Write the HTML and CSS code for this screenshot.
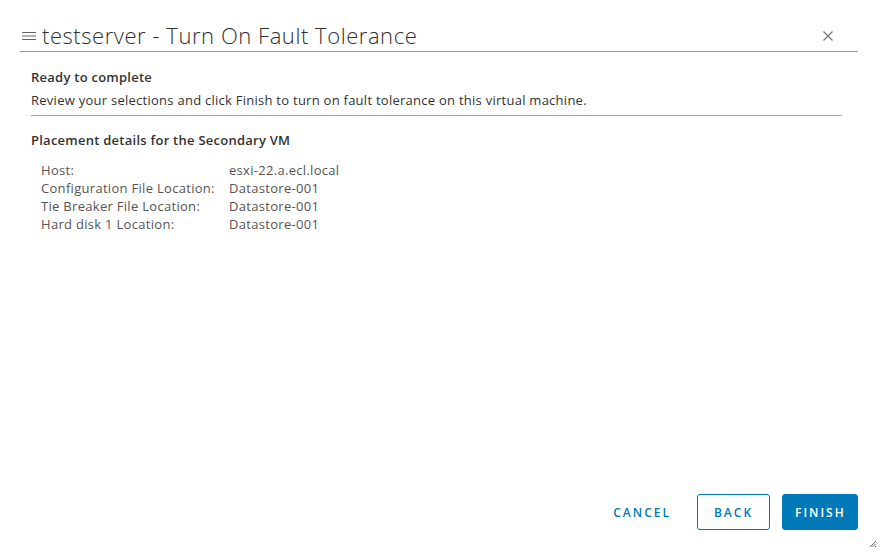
FILE: index.html
```html
<!DOCTYPE html>
<html>
<head>
<meta charset="utf-8">
<link rel="stylesheet" href="styles.css">
</head>
<body>
<div class="modal">
  <header class="modal-header">
    <div class="title">
      <svg class="menu-icon" width="14" height="12" viewBox="0 0 14 12"><path d="M0 2.5h14M0 6h14M0 9.5h14" stroke="#666" stroke-width="1.2" fill="none"/></svg>
      <h1>testserver - Turn On Fault Tolerance</h1>
    </div>
    <svg class="close-icon" width="12" height="12" viewBox="0 0 12 12"><path d="M1.5 1.5l9 9M10.5 1.5l-9 9" stroke="#777" stroke-width="1.3" fill="none"/></svg>
  </header>
  <main class="modal-body">
    <section class="intro">
      <h2>Ready to complete</h2>
      <p>Review your selections and click Finish to turn on fault tolerance on this virtual machine.</p>
    </section>
    <section class="details">
      <h3>Placement details for the Secondary VM</h3>
      <div class="grid">
        <span>Host:</span><span>esxi-22.a.ecl.local</span>
        <span>Configuration File Location:</span><span>Datastore-001</span>
        <span>Tie Breaker File Location:</span><span>Datastore-001</span>
        <span>Hard disk 1 Location:</span><span>Datastore-001</span>
      </div>
    </section>
  </main>
  <footer class="modal-footer">
    <button class="btn btn-link">CANCEL</button>
    <button class="btn btn-outline">BACK</button>
    <button class="btn btn-primary">FINISH</button>
  </footer>
  <svg class="resize" width="8" height="8" viewBox="0 0 8 8"><path d="M7 1L1 7M7 3.5L3.5 7M7 6L6 7" stroke="#666" stroke-width="1" fill="none"/></svg>
</div>
</body>
</html>
```
FILE: styles.css
```css
* { box-sizing: border-box; }
html, body { margin: 0; padding: 0; background: #fff; }
body { font-family: "Open Sans", Lato, sans-serif; color: #333; width: 880px; height: 553px; overflow: hidden; }
.modal { position: relative; height: 553px; display: flex; flex-direction: column; padding: 0 22px 0 20px; }
.modal-header { display: flex; align-items: center; justify-content: space-between; height: 52px; padding-top: 22px; border-bottom: 1px solid #9a9a9a; padding-bottom: 4px; }
.title { display: flex; align-items: center; gap: 6px; padding-left: 2px; }
.menu-icon { margin-top: 2px; }
.title h1 { margin: 0; font-size: 22px; font-weight: 300; color: #313131; letter-spacing: 0.55px; }
.close-icon { margin-right: 24px; margin-top: 2px; }
.modal-body { flex: 1; padding: 0 16px 0 11px; }
.intro { border-bottom: 1px solid #a8a8a8; padding-top: 16px; padding-bottom: 6px; }
h2, h3 { margin: 0; font-size: 13px; font-weight: 600; color: #333; line-height: 18px; letter-spacing: 0.25px; }
.intro p { margin: 5px 0 0; font-size: 13px; color: #333; line-height: 18px; letter-spacing: 0.26px; }
.details { padding-top: 15px; }
.details h3 { margin-bottom: 12px; }
.grid { display: grid; grid-template-columns: 188px auto; row-gap: 0; padding-left: 10px; font-size: 13px; color: #555; line-height: 18px; letter-spacing: 0.3px; }
.modal-footer { display: flex; justify-content: flex-end; align-items: center; gap: 12px; padding-bottom: 23px; }
.btn { font-family: inherit; font-size: 12px; font-weight: 600; letter-spacing: 2px; height: 36px; border-radius: 3px; padding: 0 12px; cursor: pointer; }
.btn-link { background: none; border: none; color: #0079b8; margin-right: 2px; }
.btn-outline { background: #fff; border: 1px solid #0079b8; color: #0079b8; width: 73px; }
.btn-primary { background: #0079b8; border: 1px solid #0079b8; color: #fff; width: 76px; }
.resize { position: absolute; right: 3px; bottom: 5px; }
```
